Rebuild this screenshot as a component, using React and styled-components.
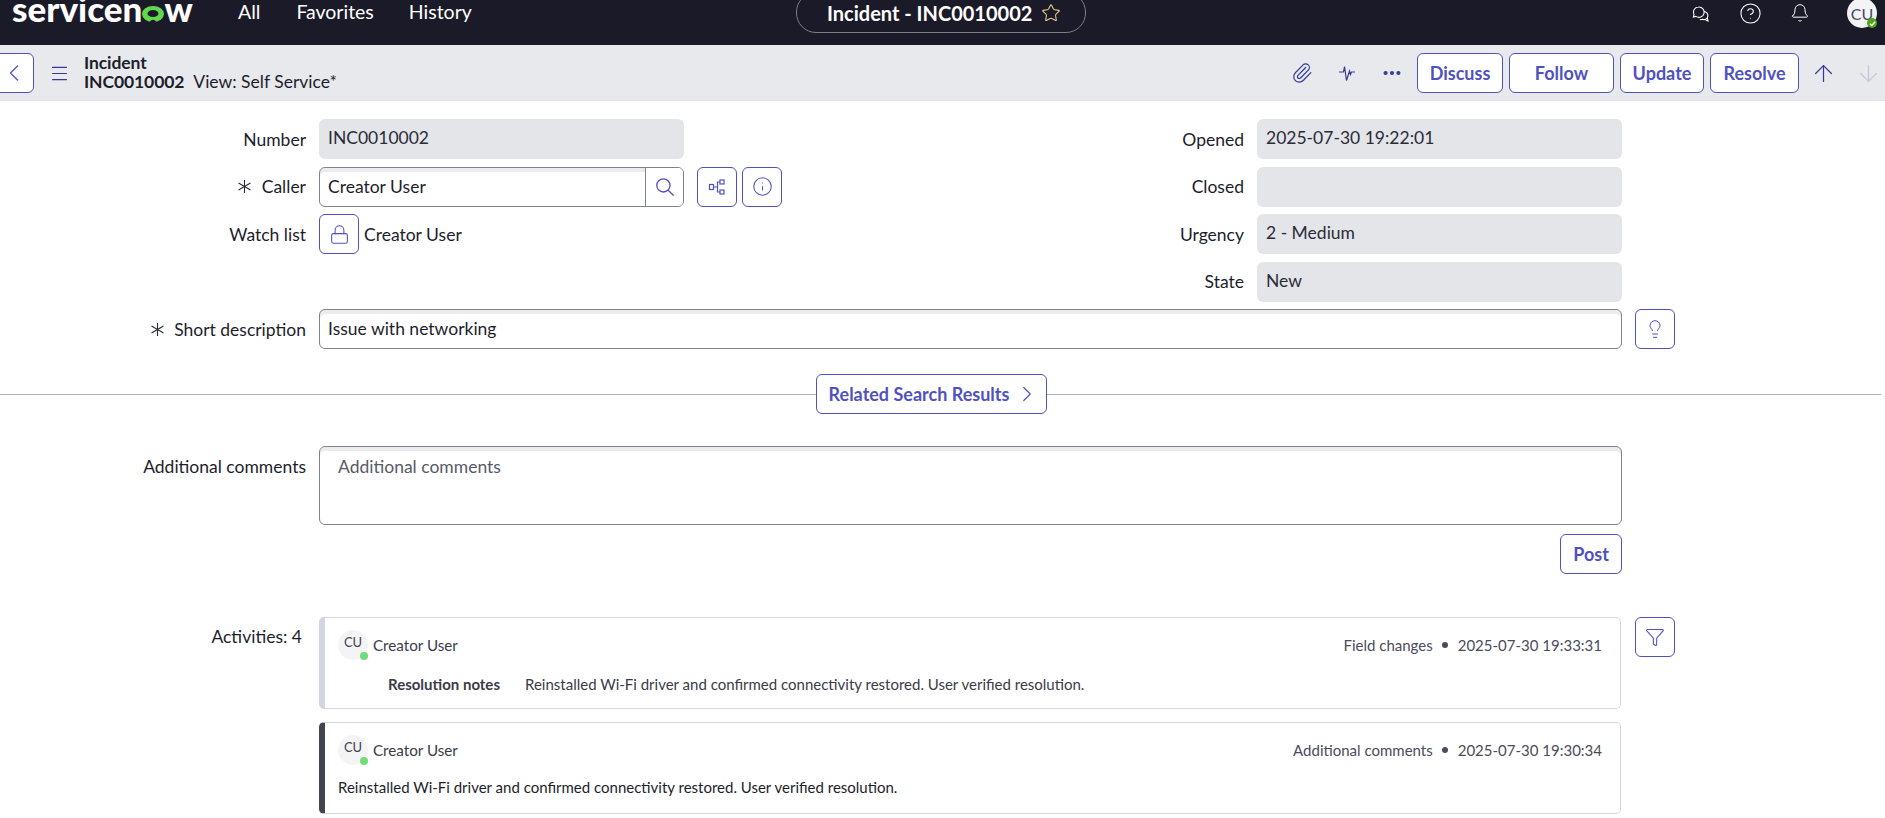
import React from "react";
import styled, { createGlobalStyle } from "styled-components";
import {
    ArrowDown,
    ArrowUp,
    Bell,
    ChevronRight,
    CircleHelp,
    Ellipsis,
    Funnel,
    Info,
    Lightbulb,
    Lock,
    Menu,
    Paperclip,
    Star,
} from "lucide-react";

const indigo = "#4f52bd";

const GlobalStyle = createGlobalStyle`
    html, body {
        margin: 0;
        height: 100%;
        overflow: hidden;
        background: #fff;
        font-family: Lato, "Open Sans", sans-serif;
        color: #1d1e2c;
    }
    * { box-sizing: border-box; }
`;

const TopBar = styled.header`
    height: 45px;
    background: #1a1a28;
    display: grid;
    grid-template-columns: 796px 290px 1fr;
    overflow: hidden;
`;

const TopLeft = styled.div`
    display: flex;
    align-items: flex-start;
    color: #fff;
`;

const Logo = styled.div`
    display: flex;
    align-items: flex-end;
    width: 238px;
    height: 22px;
    padding-left: 12px;
    font-size: 35px;
    font-weight: 900;
    line-height: 22px;
    color: #fff;
    white-space: nowrap;
    span { position: relative; top: -3px; }
    svg { flex: none; }
`;

const NavLink = styled.a`
    font-size: 19.5px;
    line-height: 24px;
    color: #fff;
    margin-right: ${(props) => props.$gap}px;
    margin-top: 0;
`;

const TitlePill = styled.div`
    height: 41px;
    margin-top: -8px;
    border: 1px solid #7d7e88;
    border-radius: 20px;
    display: flex;
    align-items: center;
    padding: 0 0 0 30px;
    gap: 9px;
    font-size: 20px;
    font-weight: 700;
    color: #fff;
    line-height: 24px;
    white-space: nowrap;
`;

const TopRight = styled.div`
    display: flex;
    align-items: flex-start;
    padding-left: 605px;
    color: #fff;
`;

const TopIcon = styled.div`
    width: ${(props) => props.$w}px;
    margin-left: ${(props) => props.$ml}px;
    margin-top: ${(props) => props.$mt}px;
    height: 20px;
    display: flex;
    align-items: center;
    justify-content: center;
    svg { flex: none; }
`;

const AvatarTop = styled.div`
    position: relative;
    flex: none;
    width: 30px;
    height: 30px;
    margin-left: 37px;
    margin-top: -2px;
    border-radius: 50%;
    background: #f4f4f6;
    color: #3f4a66;
    font-size: 16px;
    display: flex;
    align-items: center;
    justify-content: center;
`;

const TopBadge = styled.span`
    position: absolute;
    right: 0;
    bottom: 0;
    width: 10px;
    height: 10px;
    border-radius: 50%;
    background: #4ea61a;
    display: flex;
    align-items: center;
    justify-content: center;
`;

const SubBar = styled.div`
    height: 56px;
    background: #e8e9ed;
    border-bottom: 1px solid #e2e3e8;
    display: flex;
    align-items: center;
    padding-top: 1px;
`;

const BackButton = styled.button`
    width: 35px;
    height: 40px;
    margin-left: -1px;
    padding: 0 0 0 9px;
    background: #fff;
    border: 1px solid ${indigo};
    border-radius: 0 6px 6px 0;
    color: ${indigo};
    display: flex;
    align-items: center;
    justify-content: flex-start;
`;

const HamburgerSlot = styled.div`
    width: 50px;
    padding-left: 15px;
    display: flex;
    color: #333a9a;
`;

const RecordTitle = styled.div`
    margin-top: -1px;
    font-size: 17.5px;
    line-height: 18.5px;
    font-weight: 700;
    color: #1d1e2c;
    white-space: nowrap;
    letter-spacing: -0.1px;
`;

const ViewName = styled.span`
    font-weight: 400;
    margin-left: 9px;
    letter-spacing: 0;
`;

const Actions = styled.div`
    margin-left: auto;
    display: flex;
    align-items: center;
    gap: 6px;
`;

const ActionIcon = styled.div`
    width: ${(props) => props.$w}px;
    margin-left: ${(props) => props.$ml || 0}px;
    margin-right: ${(props) => props.$mr || 0}px;
    display: flex;
    justify-content: center;
    color: ${(props) => props.$color || "#333a9a"};
    svg { flex: none; }
`;

const Button = styled.button`
    height: 40px;
    width: ${(props) => props.$w}px;
    margin-left: ${(props) => props.$ml || 0}px;
    padding: 0;
    background: #fff;
    border: 1px solid ${indigo};
    border-radius: 6px;
    font-family: inherit;
    font-size: 18px;
    font-weight: 700;
    color: ${indigo};
    flex: none;
    display: flex;
    align-items: center;
    justify-content: center;
    gap: 8px;
    white-space: nowrap;
`;

const RelatedButton = styled(Button)`
    padding-left: 6px;
    gap: 5px;
`;

const Form = styled.main`
    padding-top: 18px;
`;

const Columns = styled.div`
    display: flex;
`;

const Column = styled.div`
    width: 938px;
    display: flex;
    flex-direction: column;
    gap: 7.5px;
`;

const Row = styled.div`
    display: flex;
    align-items: center;
    min-height: 40px;
`;

const Label = styled.label`
    width: 306px;
    margin-right: 13px;
    flex: none;
    display: flex;
    justify-content: flex-end;
    align-items: center;
    font-size: 17.5px;
    color: #1d1e2c;
    white-space: nowrap;
`;

const Required = styled.svg`
    margin-right: 9.5px;
`;

const ReadOnly = styled.div`
    width: 365px;
    height: 40px;
    padding: 0 9px;
    background: #e4e5e9;
    border-radius: 6px;
    font-size: 17.5px;
    line-height: 37px;
    color: #2b2c39;
`;

const InputBox = styled.div`
    width: ${(props) => props.$w}px;
    height: 40px;
    display: flex;
    flex: none;
    background: #fff;
    border: 1px solid #80838f;
    border-radius: 6px;
    box-shadow: inset 0 4px 0 #ececef;
    overflow: hidden;
    font-size: 17.5px;
    line-height: 38px;
    color: #1d1e2c;
`;

const InputText = styled.div`
    flex: 1;
    padding-left: 8px;
`;

const SearchAddon = styled.div`
    width: 38px;
    background: #fff;
    border-left: 1px solid #80838f;
    color: ${indigo};
    display: flex;
    align-items: center;
    justify-content: center;
`;

const WatchName = styled.span`
    margin-left: 5px;
    font-size: 17.5px;
    color: #1d1e2c;
`;

const DescriptionRow = styled(Row)`
    margin-top: 7.5px;
`;

const Divider = styled.div`
    margin-top: 25px;
    display: flex;
    align-items: center;
    width: 1881px;
`;

const DividerLine = styled.div`
    height: 1px;
    background: #aeb0bb;
    flex: ${(props) => (props.$w ? `0 0 ${props.$w}px` : "1")};
`;

const CommentRow = styled(Row)`
    margin-top: 32px;
    align-items: flex-start;
`;

const CommentLabel = styled(Label)`
    height: 40px;
`;

const CommentBox = styled.div`
    width: 1303px;
    height: 79px;
    padding: 6px 18px;
    border: 1px solid #80838f;
    border-radius: 6px;
    box-shadow: inset 0 4px 0 #ececef;
    font-size: 17.5px;
    line-height: 28px;
    color: #585a68;
`;

const PostRow = styled.div`
    width: 1622px;
    margin-top: 9px;
    display: flex;
    justify-content: flex-end;
`;

const ActivityRow = styled.div`
    margin-top: 43px;
    display: flex;
    align-items: flex-start;
`;

const ActivityLabel = styled(Label)`
    margin-top: 9px;
    padding-right: 4px;
`;

const Cards = styled.div`
    width: 1302px;
    display: flex;
    flex-direction: column;
    gap: 13px;
`;

const Card = styled.article`
    height: 92px;
    padding: 12px 18px 0 13px;
    border: 1px solid #d4d5e0;
    border-left: 6px solid ${(props) => props.$accent};
    border-radius: 5px;
    background: #fff;
`;

const CardHead = styled.div`
    display: flex;
    align-items: center;
`;

const Avatar = styled.div`
    position: relative;
    width: 30px;
    height: 30px;
    border-radius: 50%;
    background: #f4f4f6;
    color: #3f4150;
    font-size: 13px;
    line-height: 24px;
    text-align: center;
`;

const Presence = styled.span`
    position: absolute;
    right: 0;
    bottom: 0;
    width: 8px;
    height: 8px;
    border-radius: 50%;
    background: #71dc78;
`;

const Author = styled.span`
    margin-left: 5px;
    font-size: 15.2px;
    color: #3a3b49;
`;

const Meta = styled.div`
    margin-left: auto;
    display: flex;
    align-items: center;
    font-size: 15px;
    color: #4a4c5b;
`;

const Dot = styled.span`
    width: 6px;
    height: 6px;
    margin: 0 9.5px;
    border-radius: 50%;
    background: #4a4c5b;
`;

const FieldChange = styled.div`
    margin: 13px 0 0 50px;
    display: flex;
    font-size: 15px;
    line-height: 22px;
    color: #3a3b49;
`;

const FieldName = styled.strong`
    width: 137px;
    font-weight: 700;
`;

const CommentText = styled.div`
    margin-top: 11px;
    font-size: 15px;
    line-height: 22px;
    color: #1d1e2c;
`;

const FilterSlot = styled.div`
    margin-left: 14px;
`;

// ring of the "now" o, thick with a small notch at the bottom
const LogoO = () => (
    <svg width="22" height="16" viewBox="0 0 22 16">
        <path
            fillRule="evenodd"
            fill="#62d84e"
            d="M0 8A11 8 0 0 1 22 8A11 8 0 0 1 0 8ZM5.5 7.5A5.5 3.6 0 0 0 16.5 7.5A5.5 3.6 0 0 0 5.5 7.5Z"
        />
        <path fill="#1a1a28" d="M7.5 16Q11 11.5 14.5 16Z" />
    </svg>
);

const ChatIcon = () => (
    <svg width="19" height="17" viewBox="0 0 19 17" fill="none" stroke="#fff" strokeWidth="1.1">
        <path d="M6.5 1a5.2 5.2 0 0 0-4.5 7.6L1.4 11l2.5-.6A5.2 5.2 0 1 0 6.5 1Z" />
        <path d="M12 5.6a4 4 0 1 1-1.6 7.7l-2.6.5" />
        <path d="M15.4 12l.6 3-2.6-1.2" />
    </svg>
);

const PulseIcon = () => (
    <svg width="16" height="15" viewBox="0 0 16 15" fill="none" stroke="currentColor" strokeWidth="1.2">
        <path d="M0 6H4.5L5.5 0.5L7.5 14.5L10.5 5L11.5 8.5L12.5 6H16" />
    </svg>
);

const NodesIcon = () => (
    <svg width="18" height="18" viewBox="0 0 18 18" fill="none" stroke="currentColor" strokeWidth="1.2">
        <rect x="1.5" y="6.5" width="4" height="5" />
        <rect x="12" y="2" width="4" height="4" />
        <rect x="12" y="12" width="4" height="4" />
        <path d="M5.5 9H9M12 4H9.5V14H12" />
    </svg>
);

const BackChevron = () => (
    <svg width="10" height="16" viewBox="0 0 10 16" fill="none" stroke="currentColor" strokeWidth="1.3">
        <path d="M9 .5L1.5 8L9 15.5" />
    </svg>
);

const SearchGlyph = () => (
    <svg width="18" height="18" viewBox="0 0 18 18" fill="none" stroke="currentColor" strokeWidth="1.3">
        <circle cx="7.4" cy="7.4" r="6.6" />
        <path d="M12.2 12.2L17.6 17.6" />
    </svg>
);

const RequiredMark = () => (
    <Required width="15" height="15" viewBox="0 0 15 15" fill="none" stroke="#2b2c39" strokeWidth="1.1">
        <path d="M7.5 1V14M1.5 4L13.5 11M13.5 4L1.5 11" />
    </Required>
);

const ReadField = ({ label, value }) => (
    <Row>
        <Label>{label}</Label>
        <ReadOnly>{value}</ReadOnly>
    </Row>
);

const ActivityCard = ({ accent, kind, time, children }) => (
    <Card $accent={accent}>
        <CardHead>
            <Avatar>
                CU
                <Presence />
            </Avatar>
            <Author>Creator User</Author>
            <Meta>
                {kind}
                <Dot />
                {time}
            </Meta>
        </CardHead>
        {children}
    </Card>
);

const App = () => {
    return (
        <>
            <GlobalStyle />
            <TopBar>
                <TopLeft>
                    <Logo>
                        <span>servicen</span>
                        <LogoO />
                        <span>w</span>
                    </Logo>
                    <NavLink $gap={36}>All</NavLink>
                    <NavLink $gap={35}>Favorites</NavLink>
                    <NavLink $gap={0}>History</NavLink>
                </TopLeft>
                <TitlePill>
                    Incident - INC0010002
                    <Star size={20} color="#e6c98c" strokeWidth={1.3} />
                </TitlePill>
                <TopRight>
                    <TopIcon $w={20} $ml={0} $mt={4}>
                        <ChatIcon />
                    </TopIcon>
                    <TopIcon $w={20} $ml={29} $mt={3}>
                        <CircleHelp size={23} strokeWidth={1.1} />
                    </TopIcon>
                    <TopIcon $w={20} $ml={30} $mt={3}>
                        <Bell size={20} strokeWidth={1.2} />
                    </TopIcon>
                    <AvatarTop>
                        CU
                        <TopBadge>
                            <svg width="7" height="7" viewBox="0 0 8 8" fill="none" stroke="#fff" strokeWidth="1.6">
                                <path d="M1 4.2L3.2 6.2L7 2" />
                            </svg>
                        </TopBadge>
                    </AvatarTop>
                </TopRight>
            </TopBar>
            <SubBar>
                <BackButton>
                    <BackChevron />
                </BackButton>
                <HamburgerSlot>
                    <Menu size={21} strokeWidth={1.2} />
                </HamburgerSlot>
                <RecordTitle>
                    Incident
                    <br />
                    INC0010002
                    <ViewName>View: Self Service*</ViewName>
                </RecordTitle>
                <Actions>
                    <ActionIcon $w={17}>
                        <Paperclip size={22} strokeWidth={1.3} />
                    </ActionIcon>
                    <ActionIcon $w={18} $ml={22}>
                        <PulseIcon />
                    </ActionIcon>
                    <ActionIcon $w={15} $ml={22}>
                        <Ellipsis size={22} strokeWidth={2.6} />
                    </ActionIcon>
                    <Button $w={86} $ml={12}>Discuss</Button>
                    <Button $w={105}>Follow</Button>
                    <Button $w={84}>Update</Button>
                    <Button $w={89}>Resolve</Button>
                    <ActionIcon $w={20} $ml={8}>
                        <ArrowUp size={27} strokeWidth={1.1} />
                    </ActionIcon>
                    <ActionIcon $w={20} $ml={19} $mr={7} $color="#c4c6d8">
                        <ArrowDown size={27} strokeWidth={1.1} />
                    </ActionIcon>
                </Actions>
            </SubBar>
            <Form>
                <Columns>
                    <Column>
                        <ReadField label="Number" value="INC0010002" />
                        <Row>
                            <Label>
                                <RequiredMark />
                                Caller
                            </Label>
                            <InputBox $w={365}>
                                <InputText>Creator User</InputText>
                                <SearchAddon>
                                    <SearchGlyph />
                                </SearchAddon>
                            </InputBox>
                            <Button $w={40} $ml={13}>
                                <NodesIcon />
                            </Button>
                            <Button $w={40} $ml={5}>
                                <Info size={21} strokeWidth={1.2} />
                            </Button>
                        </Row>
                        <Row>
                            <Label>Watch list</Label>
                            <Button $w={40}>
                                <Lock size={21} strokeWidth={1.2} />
                            </Button>
                            <WatchName>Creator User</WatchName>
                        </Row>
                    </Column>
                    <Column>
                        <ReadField label="Opened" value="2025-07-30 19:22:01" />
                        <ReadField label="Closed" value="" />
                        <ReadField label="Urgency" value="2 - Medium" />
                        <ReadField label="State" value="New" />
                    </Column>
                </Columns>
                <DescriptionRow>
                    <Label>
                        <RequiredMark />
                        Short description
                    </Label>
                    <InputBox $w={1303}>
                        <InputText>Issue with networking</InputText>
                    </InputBox>
                    <Button $w={40} $ml={13}>
                        <Lightbulb size={20} strokeWidth={1.2} />
                    </Button>
                </DescriptionRow>
                <Divider>
                    <DividerLine $w={816} />
                    <RelatedButton $w={231}>
                        Related Search Results
                        <ChevronRight size={26} strokeWidth={1.1} />
                    </RelatedButton>
                    <DividerLine />
                </Divider>
                <CommentRow>
                    <CommentLabel>Additional comments</CommentLabel>
                    <CommentBox>Additional comments</CommentBox>
                </CommentRow>
                <PostRow>
                    <Button $w={62}>Post</Button>
                </PostRow>
                <ActivityRow>
                    <ActivityLabel>Activities: 4</ActivityLabel>
                    <Cards>
                        <ActivityCard accent="#d4d5e0" kind="Field changes" time="2025-07-30 19:33:31">
                            <FieldChange>
                                <FieldName>Resolution notes</FieldName>
                                Reinstalled Wi-Fi driver and confirmed connectivity restored. User verified resolution.
                            </FieldChange>
                        </ActivityCard>
                        <ActivityCard accent="#42434f" kind="Additional comments" time="2025-07-30 19:30:34">
                            <CommentText>
                                Reinstalled Wi-Fi driver and confirmed connectivity restored. User verified resolution.
                            </CommentText>
                        </ActivityCard>
                    </Cards>
                    <FilterSlot>
                        <Button $w={40}>
                            <Funnel size={20} strokeWidth={1.3} />
                        </Button>
                    </FilterSlot>
                </ActivityRow>
            </Form>
        </>
    );
};

export default App;
